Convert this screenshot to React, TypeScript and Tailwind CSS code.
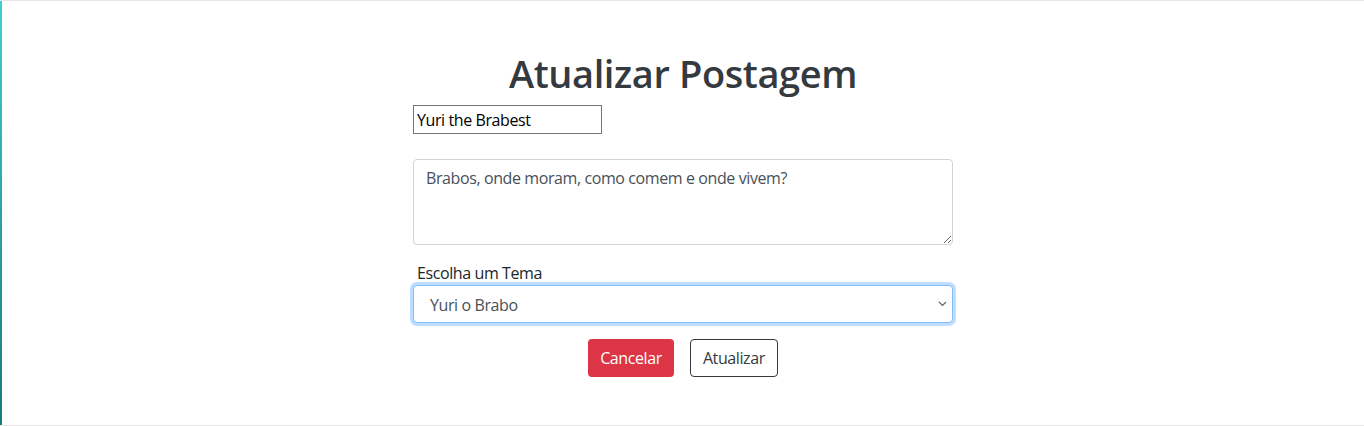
const AtualizarPostagem = () => {
  return (
    <div className="flex w-full h-[426px] bg-white border-y border-[#e6e6e6] font-['Open_Sans',sans-serif] text-[#212529] tracking-[-0.025em]">
      {/* left accent strip */}
      <div className="w-[2px] shrink-0 bg-gradient-to-b from-[#3fd0d0] to-[#1d7878]" />
      <div className="flex-1 flex justify-center">
        <div className="w-[540px] pt-[48px]">
          <h1 className="text-[38px] leading-[48px] font-semibold text-center text-[#343a40] mb-2">
            Atualizar Postagem
          </h1>
          <form action="#">
            <input
              type="text"
              defaultValue="Yuri the Brabest"
              className="block w-[189px] h-[29px] border border-[#767676] px-[3px] text-[16px] text-black outline-none"
            />
            <textarea
              rows={3}
              defaultValue="Brabos, onde moram, como comem e onde vivem?"
              className="block w-full h-[86px] mt-[25px] px-3 py-[6px] border border-[#ced4da] rounded text-[16px] leading-6 text-[#495057] outline-none resize-y"
            />
            <div className="mt-4">
              <label className="block px-[4px] text-[16px] leading-6 text-[#212529]">
                Escolha um Tema
              </label>
              <div className="relative">
                <select
                  defaultValue="yuri"
                  className="appearance-none block w-full h-[38px] pl-[16px] pt-[2px] border border-[#80bdff] rounded text-[16px] text-[#495057] bg-white outline-none shadow-[0_0_0_3px_rgba(0,123,255,0.25)]"
                >
                  <option value="yuri">Yuri o Brabo</option>
                </select>
                <svg
                  className="absolute right-[6px] top-[16px] pointer-events-none"
                  width="9"
                  height="6"
                  viewBox="0 0 9 6"
                  fill="none"
                >
                  <path d="M1 1l3.5 3.5L8 1" stroke="#666" strokeWidth="1.2" />
                </svg>
              </div>
            </div>
            <div className="flex justify-center gap-4 mt-4">
              <button
                type="button"
                className="h-[38px] px-3 rounded bg-[#dc3545] text-white text-[16px]"
              >
                Cancelar
              </button>
              <button
                type="submit"
                className="h-[38px] px-3 rounded border border-[#343a40] text-[#343a40] text-[16px]"
              >
                Atualizar
              </button>
            </div>
          </form>
        </div>
      </div>
    </div>
  );
};

export default AtualizarPostagem;
